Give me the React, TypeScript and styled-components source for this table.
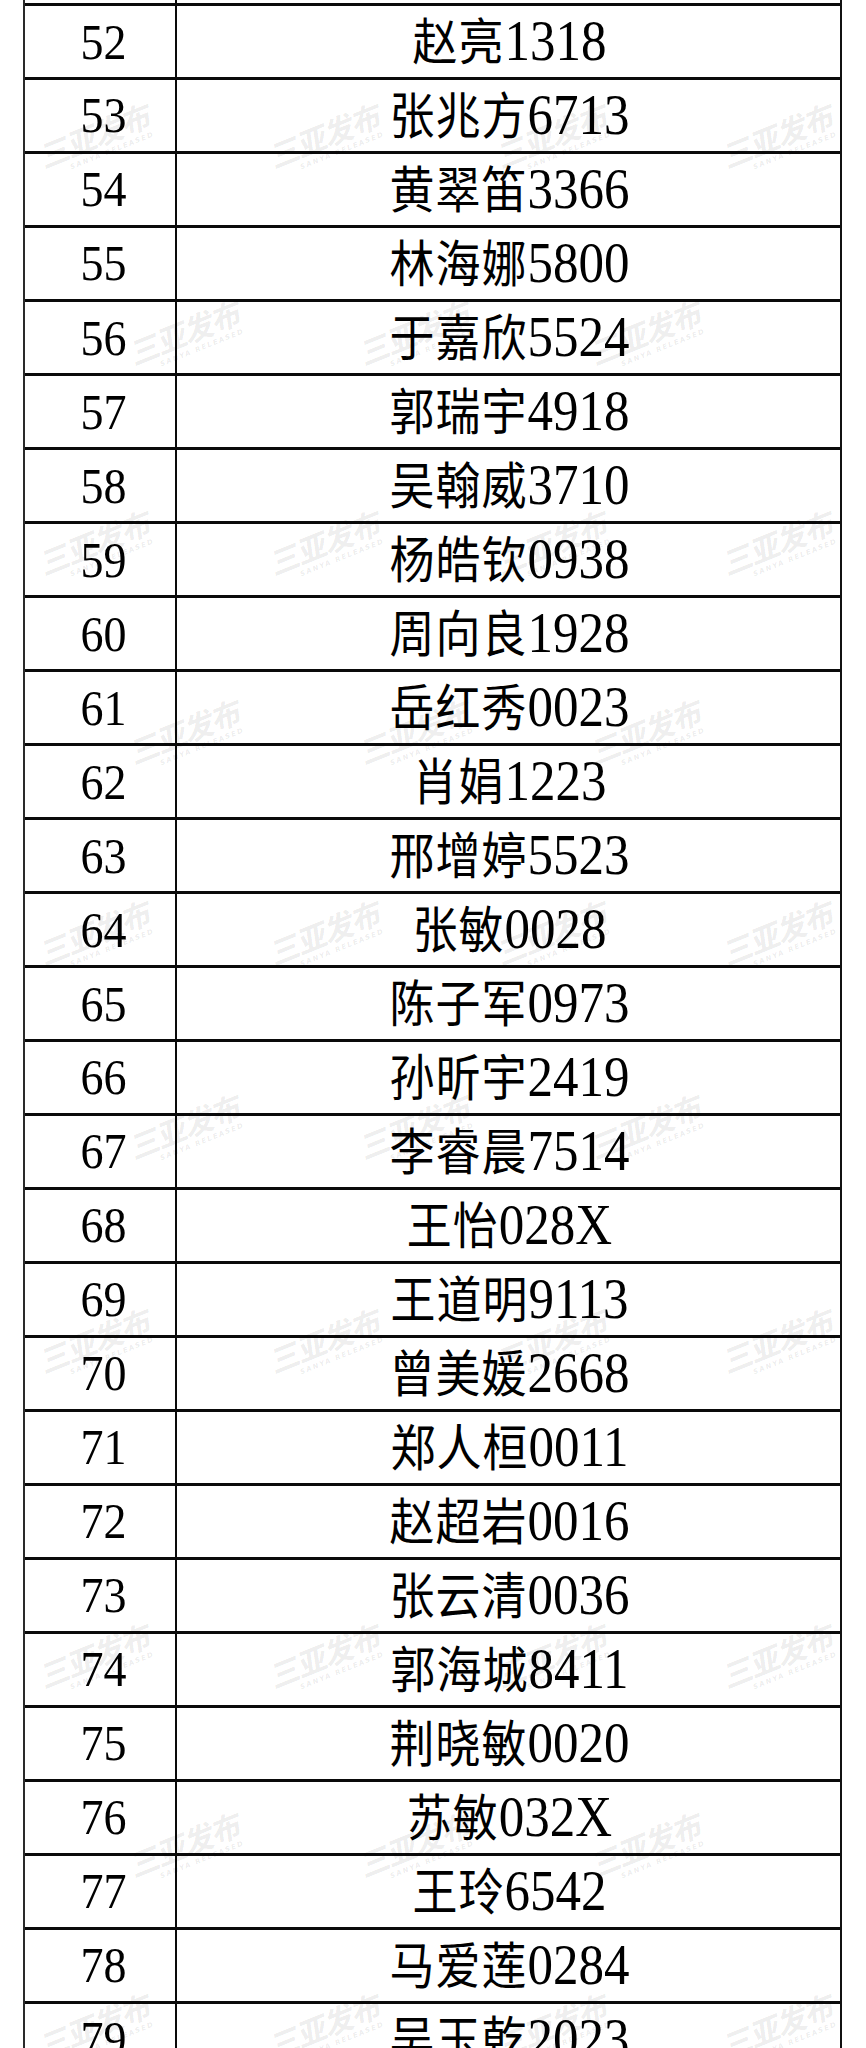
import React from "react";
import styled, { createGlobalStyle } from "styled-components";

const Global = createGlobalStyle`
  html, body { margin: 0; padding: 0; background: #ffffff; }
  #root { width: 866px; }
`;

const Page = styled.div`
  position: relative;
  width: 866px;
  height: 2048px;
  overflow: hidden;
  background: #ffffff;
`;

const Table = styled.div`
  margin-left: 23px;
  width: 819px;
  box-sizing: border-box;
  border-left: 2px solid #2a2a2a;
  border-right: 2px solid #111;
  display: flex;
  flex-direction: column;
`;

const Row = styled.div<{ $stub?: boolean }>`
  display: grid;
  grid-template-columns: 152px 1fr;
  box-sizing: border-box;
  height: ${(p) => (p.$stub ? "3px" : "74px")};
  border-top: ${(p) => (p.$stub ? "none" : "3px solid #0a0a0a")};
  flex: none;
`;

const NumCell = styled.div`
  border-right: 2px solid #0a0a0a;
  display: flex;
  align-items: center;
  justify-content: center;
  padding-left: 7px;
`;

const NameCell = styled.div`
  display: flex;
  align-items: center;
  justify-content: center;
  padding-left: 2px;
`;

const Num = styled.span`
  font-family: "Liberation Serif", "Times New Roman", serif;
  font-size: 46px;
  color: #000;
  line-height: 1;
  display: inline-block;
  transform: scaleY(1.1);
`;

const Name = styled.span`
  display: inline-flex;
  align-items: baseline;
  color: #000;
  line-height: 1;
  transform: scaleY(1.1);
`;

const Given = styled.span`
  font-family: "Noto Sans CJK SC", "Noto Sans CJK TC", sans-serif;
  font-size: 45px;
  font-weight: 400;
  letter-spacing: 1px;
`;

const Code = styled.span`
  font-family: "Liberation Serif", "Times New Roman", serif;
  font-size: 51px;
`;

const Mark = styled.div`
  position: absolute;
  transform: translate(-50%, -50%) rotate(-22deg);
  pointer-events: none;
  display: flex;
  flex-direction: column;
  align-items: center;
  color: rgba(0, 0, 0, 0.085);
`;

const MarkTitle = styled.span`
  font-family: "Noto Sans CJK SC", sans-serif;
  font-weight: 700;
  font-style: italic;
  font-size: 30px;
  letter-spacing: -1px;
  line-height: 1;
  white-space: nowrap;
`;

const MarkSub = styled.span`
  font-family: "DejaVu Sans", sans-serif;
  font-weight: 700;
  font-style: italic;
  font-size: 7px;
  letter-spacing: 1.5px;
  margin-top: 3px;
  margin-left: 24px;
  white-space: nowrap;
`;

const rows: [number, string, string][] = [
  [52, "赵亮", "1318"],
  [53, "张兆方", "6713"],
  [54, "黄翠笛", "3366"],
  [55, "林海娜", "5800"],
  [56, "于嘉欣", "5524"],
  [57, "郭瑞宇", "4918"],
  [58, "吴翰威", "3710"],
  [59, "杨皓钦", "0938"],
  [60, "周向良", "1928"],
  [61, "岳红秀", "0023"],
  [62, "肖娟", "1223"],
  [63, "邢增婷", "5523"],
  [64, "张敏", "0028"],
  [65, "陈子军", "0973"],
  [66, "孙昕宇", "2419"],
  [67, "李睿晨", "7514"],
  [68, "王怡", "028X"],
  [69, "王道明", "9113"],
  [70, "曾美媛", "2668"],
  [71, "郑人桓", "0011"],
  [72, "赵超岩", "0016"],
  [73, "张云清", "0036"],
  [74, "郭海城", "8411"],
  [75, "荆晓敏", "0020"],
  [76, "苏敏", "032X"],
  [77, "王玲", "6542"],
  [78, "马爱莲", "0284"],
  [79, "吴玉乾", "2023"],
];

const rowA = [95, 325, 552, 778];
const rowB = [185, 415, 646];
const marks: [number, number][] = [
  ...[140, 547, 937, 1345, 1660, 2030].flatMap((y) => rowA.map((x) => [x, y] as [number, number])),
  ...[337, 736, 1131, 1849].flatMap((y) => rowB.map((x) => [x, y] as [number, number])),
];

export default function App() {
  return (
    <Page>
      <Global />
      <Table>
        <Row $stub>
          <NumCell />
          <NameCell />
        </Row>
        {rows.map(([n, given, code]) => (
          <Row key={n}>
            <NumCell>
              <Num>{n}</Num>
            </NumCell>
            <NameCell>
              <Name>
                <Given>{given}</Given>
                <Code>{code}</Code>
              </Name>
            </NameCell>
          </Row>
        ))}
      </Table>
      {marks.map(([x, y], i) => (
        <Mark key={i} style={{ left: x, top: y }}>
          <MarkTitle>三亚发布</MarkTitle>
          <MarkSub>SANYA RELEASED</MarkSub>
        </Mark>
      ))}
    </Page>
  );
}
